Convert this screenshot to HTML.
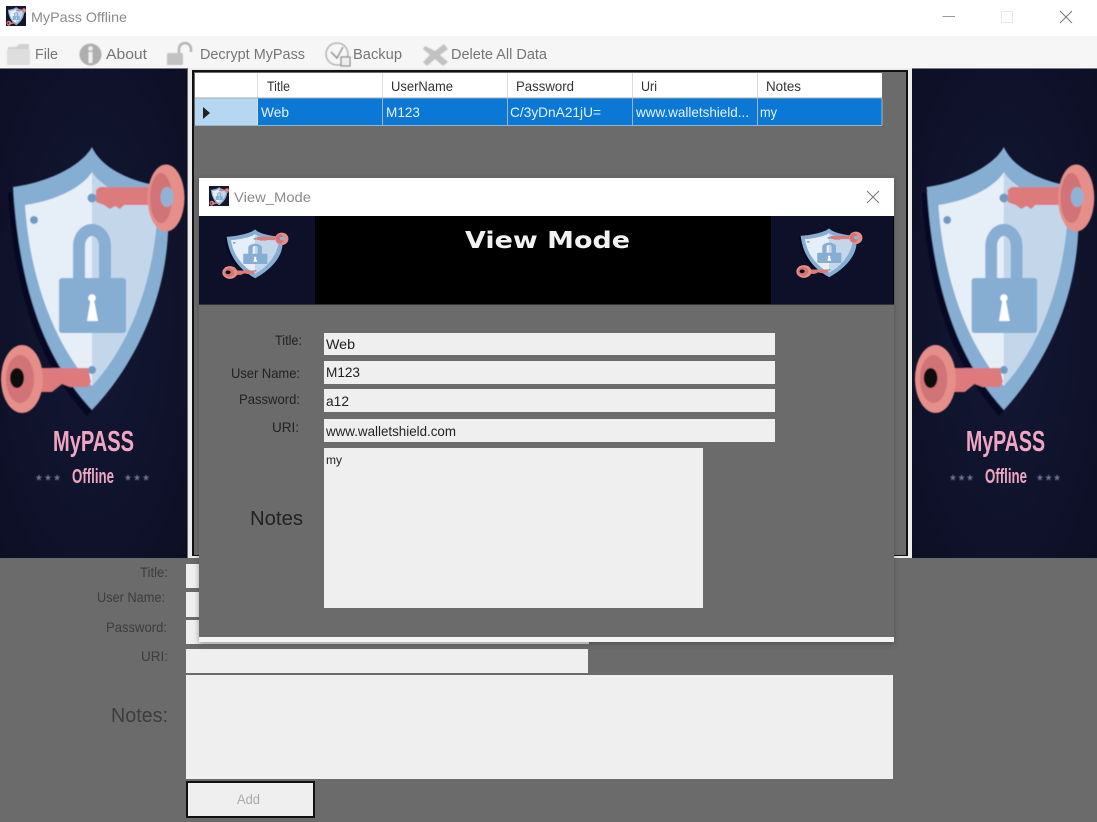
<!DOCTYPE html>
<html lang="en"><head><meta charset="utf-8"><title>MyPass Offline</title>
<style>
html,body{margin:0;padding:0;background:#6b6b6b;width:1097px;height:822px;overflow:hidden}
svg{display:block;position:absolute;left:0;top:0}
text{font-family:"Liberation Sans",sans-serif}
</style></head><body>
<svg width="1097" height="822" viewBox="0 0 1097 822" xmlns="http://www.w3.org/2000/svg">
<defs>
<filter id="s" x="-5%" y="-5%" width="110%" height="110%"><feGaussianBlur stdDeviation="0.6"/></filter>
<filter id="sh" x="-5%" y="-5%" width="110%" height="110%"><feGaussianBlur stdDeviation="3"/></filter>
<filter id="t" x="-5%" y="-20%" width="110%" height="140%"><feGaussianBlur stdDeviation="0.3"/></filter>
<filter id="st" x="-10%" y="-30%" width="120%" height="160%"><feGaussianBlur stdDeviation="0.5"/></filter>
<radialGradient id="pg" cx=".5" cy=".5" r=".7"><stop offset="0" stop-color="#141834"/><stop offset="1" stop-color="#0d0f26"/></radialGradient>
<g id="logo">
<path d="M92 147C100 165 125 182 168 187L168 233C165 300 135 365 92 410C50 365 20 300 13 187C50 182 82 165 92 147Z" fill="#07081a" transform="translate(-5 6)" opacity=".6"/>
<path d="M92 147C100 165 125 182 168 187L168 233C165 300 135 365 92 410C50 365 20 300 13 187C50 182 82 165 92 147Z" fill="#86add2"/>
<path d="M92 172C100 185 125 200 158 205C155 280 130 345 92 386Z" fill="#c4d6ea"/>
<path d="M92 172C84 185 60 200 25 205C30 280 55 345 92 386Z" fill="#e6eef7"/>
<circle cx="34" cy="220" r="4" fill="#6f9ac4"/><circle cx="92" cy="198" r="4.500" fill="#6f9ac4"/><circle cx="92" cy="370" r="4" fill="#6f9ac4"/>
<path d="M79 280V246A13 16 0 0 1 105 246V280" fill="none" stroke="#88aed3" stroke-width="12"/>
<rect x="59" y="278" width="67" height="55" rx="3" fill="#86add2"/>
<circle cx="92" cy="298" r="3.800" fill="#fff"/><path d="M90.500 300L87 321H98L94 300Z" fill="#fff"/>
<path d="M96 190L100 187H152V205H124L120 209L115 206L110 209L104 205L96 202Z" fill="#dc7a7c"/>
<ellipse cx="166" cy="198" rx="18.500" ry="33.500" fill="#e58e8a"/>
<ellipse cx="161" cy="198" rx="11" ry="25" fill="#d27377"/>
<ellipse cx="167" cy="197" rx="6.500" ry="10" fill="#8fb3d4"/>
<path d="M40 368H88L91 382L88 387H70L62 384L52 392H38Z" fill="#dc7a7c"/>
<ellipse cx="22" cy="379" rx="21" ry="34" fill="#e58e8a"/>
<ellipse cx="20" cy="379" rx="14" ry="24" fill="#d27377"/>
<ellipse cx="17" cy="378" rx="7" ry="10" fill="#070710"/>
</g>
</defs>

<rect width="1097" height="822" fill="#6b6b6b"/>
<!-- title bar -->
<rect width="1097" height="36" fill="#fff"/>
<rect y="36" width="1097" height="32" fill="#f6f6f6"/>
<rect x="6" y="6" width="20" height="20" fill="#15162c"/>
<g transform="translate(6.500 -3.300) scale(.105 .07)" filter="url(#s)"><use href="#logo"/></g>
<text x="31" y="22" font-size="14" fill="#8a8a8a" textLength="96" lengthAdjust="spacingAndGlyphs">MyPass Offline</text>
<path d="M942.500 16.500H955" stroke="#999" stroke-width="1"/>
<rect x="1001.500" y="11.500" width="11" height="11" fill="none" stroke="#e8e8e8"/>
<path d="M1060 11L1072 23M1072 11L1060 23" stroke="#777" stroke-width="1"/>

<!-- toolbar -->
<g filter="url(#st)">
<path d="M8 47H16L19 44H29V64H8Z" fill="#d0d0d0"/><rect x="7" y="49" width="23" height="16" rx="1" fill="#dedede"/>
<circle cx="90.500" cy="54.500" r="11" fill="#aeaeae"/><rect x="88.500" y="52" width="4" height="11" fill="#f0f0f0"/><circle cx="90.500" cy="48.500" r="2.300" fill="#f0f0f0"/>
<rect x="167" y="53" width="16" height="12" rx="1" fill="#c2c2c2"/><path d="M179 53V49A5.500 5.500 0 0 1 191 49V52" fill="none" stroke="#b5b5b5" stroke-width="2.500"/>
<circle cx="337" cy="54" r="11" fill="none" stroke="#aaa" stroke-width="1.300"/><path d="M331 52L337 58L343 47" fill="none" stroke="#888" stroke-width="1.300"/><rect x="341" y="57" width="9" height="9" fill="#eee" stroke="#888" stroke-width="1.200"/>
<path d="M425 46L435 51L444 44L448 49L440 55L448 62L443 66L435 59L427 66L423 62L430 55L423 49Z" fill="#c2c2c2"/>
</g>
<g font-size="15" fill="#757575" filter="url(#t)">
<text x="35" y="59" textLength="23" lengthAdjust="spacingAndGlyphs">File</text>
<text x="106" y="59" textLength="41" lengthAdjust="spacingAndGlyphs">About</text>
<text x="200" y="59" textLength="105" lengthAdjust="spacingAndGlyphs">Decrypt MyPass</text>
<text x="353" y="59" textLength="49" lengthAdjust="spacingAndGlyphs">Backup</text>
<text x="451" y="59" textLength="96" lengthAdjust="spacingAndGlyphs">Delete All Data</text>
</g>

<!-- left image panel -->
<rect x="0" y="68" width="187" height="490" fill="url(#pg)"/>
<rect x="0" y="68" width="187" height="1" fill="#777a88"/>
<g filter="url(#s)"><use href="#logo"/></g>
<g fill="#efa6c2" font-weight="bold" filter="url(#t)">
<text x="53" y="451" font-size="29" textLength="81" lengthAdjust="spacingAndGlyphs">MyPASS</text>
<text x="72" y="483" font-size="20" textLength="42" lengthAdjust="spacingAndGlyphs">Offline</text>
</g>
<g fill="#8e94b2" font-size="15" filter="url(#st)">
<text x="36" y="485" textLength="24" lengthAdjust="spacing">***</text>
<text x="125" y="485" textLength="24" lengthAdjust="spacing">***</text>
</g>

<!-- right image panel -->
<rect x="912" y="68" width="185" height="490" fill="url(#pg)"/>
<rect x="912" y="68" width="185" height="1" fill="#777a88"/>
<g transform="translate(914 0) scale(.977 1)" filter="url(#s)"><use href="#logo"/></g>
<g fill="#efa6c2" font-weight="bold" filter="url(#t)">
<text x="966" y="451" font-size="29" textLength="79" lengthAdjust="spacingAndGlyphs">MyPASS</text>
<text x="985" y="483" font-size="20" textLength="42" lengthAdjust="spacingAndGlyphs">Offline</text>
</g>
<g fill="#8e94b2" font-size="15" filter="url(#st)">
<text x="950" y="485" textLength="23" lengthAdjust="spacing">***</text>
<text x="1037" y="485" textLength="23" lengthAdjust="spacing">***</text>
</g>

<!-- grid container -->
<rect x="188" y="68" width="724" height="490" fill="#ececec"/>
<rect x="192" y="70" width="716" height="486" fill="#111"/>
<rect x="194" y="72" width="712" height="483" fill="#6b6b6b"/>
<rect x="195" y="73" width="687" height="25" fill="#fff"/>
<rect x="195" y="98" width="62" height="27" fill="#b6d7f1"/>
<rect x="257" y="98" width="625" height="27" fill="#0a78d4"/>
<path d="M257.500 73V125M382.500 73V98M507.500 73V98M632.500 73V98M757.500 73V98" stroke="#dcdcdc"/>
<path d="M195 98H882" stroke="#a8a8a8"/>
<path d="M195 125.500H882M382.500 98V125M507.500 98V125M632.500 98V125M757.500 98V125M882 98V125" stroke="#9db4c8"/>
<path d="M203 107L210 113L203 119Z" fill="#222"/>
<g font-size="14" fill="#333" filter="url(#t)">
<text x="267" y="91" textLength="23" lengthAdjust="spacingAndGlyphs">Title</text>
<text x="391" y="91" textLength="62" lengthAdjust="spacingAndGlyphs">UserName</text>
<text x="516" y="91" textLength="58" lengthAdjust="spacingAndGlyphs">Password</text>
<text x="641" y="91" textLength="16" lengthAdjust="spacingAndGlyphs">Uri</text>
<text x="766" y="91" textLength="35" lengthAdjust="spacingAndGlyphs">Notes</text>
</g>
<g font-size="14" fill="#e6f2fb" filter="url(#t)">
<text x="261" y="117" textLength="28" lengthAdjust="spacingAndGlyphs">Web</text>
<text x="386" y="117" textLength="34" lengthAdjust="spacingAndGlyphs">M123</text>
<text x="510" y="117" textLength="91" lengthAdjust="spacingAndGlyphs">C/3yDnA21jU=</text>
<text x="636" y="117" textLength="113" lengthAdjust="spacingAndGlyphs">www.walletshield...</text>
<text x="760" y="117" textLength="17" lengthAdjust="spacingAndGlyphs">my</text>
</g>

<!-- lower form -->
<g fill="#efefef">
<rect x="186" y="564" width="403" height="24"/>
<rect x="186" y="592" width="403" height="25"/>
<rect x="186" y="620" width="403" height="24"/>
<rect x="186" y="649" width="402" height="24"/>
<rect x="186" y="675" width="707" height="104"/>
</g>
<g font-size="14" fill="#3c3c3c" filter="url(#t)">
<text x="140" y="577" textLength="28" lengthAdjust="spacingAndGlyphs">Title:</text>
<text x="97" y="602" textLength="68" lengthAdjust="spacingAndGlyphs">User Name:</text>
<text x="106" y="632" textLength="61" lengthAdjust="spacingAndGlyphs">Password:</text>
<text x="141" y="661" textLength="27" lengthAdjust="spacingAndGlyphs">URI:</text>
<text x="111" y="722" font-size="20" textLength="57" lengthAdjust="spacingAndGlyphs">Notes:</text>
</g>
<rect x="187" y="782" width="127" height="35" fill="#efefef" stroke="#111" stroke-width="2"/>
<text x="237" y="804" font-size="14" fill="#aaa" textLength="23" lengthAdjust="spacingAndGlyphs">Add</text>

<!-- modal -->
<rect x="199" y="180" width="695" height="464" fill="#333" opacity=".45" filter="url(#sh)"/>
<rect x="199" y="178" width="695" height="464" fill="#6b6b6b"/>
<rect x="199" y="178" width="695" height="38" fill="#fff"/>
<rect x="209" y="186" width="20" height="20" fill="#15162c"/>
<g transform="translate(209.500 176.700) scale(.105 .07)" filter="url(#s)"><use href="#logo"/></g>
<text x="234" y="202" font-size="14" fill="#8a8a8a" textLength="77" lengthAdjust="spacingAndGlyphs">View_Mode</text>
<path d="M867 191L879 203M879 191L867 203" stroke="#777"/>
<rect x="199" y="216" width="695" height="88" fill="#000"/>
<rect x="199" y="216" width="116" height="88" fill="#0e1029"/>
<rect x="771" y="216" width="122" height="88" fill="#0e1029"/>
<rect x="199" y="304" width="695" height="1" fill="#333"/>
<g transform="translate(222 202) scale(.36 .186)" filter="url(#t)"><use href="#logo"/></g>
<g transform="translate(796 201) scale(.36 .186)" filter="url(#t)"><use href="#logo"/></g>
<text x="465" y="248" font-size="23" font-weight="bold" fill="#f2f2f2" textLength="165" lengthAdjust="spacingAndGlyphs" style="font-family:'DejaVu Sans',sans-serif">View Mode</text>
<rect x="199" y="637" width="695" height="5" fill="#f4f4f4"/>
<g fill="#efefef">
<rect x="324" y="333" width="451" height="22"/>
<rect x="324" y="361" width="451" height="23"/>
<rect x="324" y="389" width="451" height="23"/>
<rect x="324" y="419" width="451" height="23"/>
<rect x="324" y="448" width="379" height="160"/>
</g>
<g font-size="14" fill="#222" filter="url(#t)">
<text x="275" y="345" textLength="27" lengthAdjust="spacingAndGlyphs">Title:</text>
<text x="231" y="378" textLength="69" lengthAdjust="spacingAndGlyphs">User Name:</text>
<text x="239" y="404" textLength="61" lengthAdjust="spacingAndGlyphs">Password:</text>
<text x="272" y="432" textLength="27" lengthAdjust="spacingAndGlyphs">URI:</text>
<text x="250" y="525" font-size="20" textLength="53" lengthAdjust="spacingAndGlyphs">Notes</text>
<text x="326" y="349" textLength="29" lengthAdjust="spacingAndGlyphs">Web</text>
<text x="326" y="377" textLength="34" lengthAdjust="spacingAndGlyphs">M123</text>
<text x="326" y="406" textLength="23" lengthAdjust="spacingAndGlyphs">a12</text>
<text x="326" y="436" textLength="130" lengthAdjust="spacingAndGlyphs">www.walletshield.com</text>
<text x="326" y="464" font-size="12" textLength="16" lengthAdjust="spacingAndGlyphs">my</text>
</g>
</svg>
</body></html>
